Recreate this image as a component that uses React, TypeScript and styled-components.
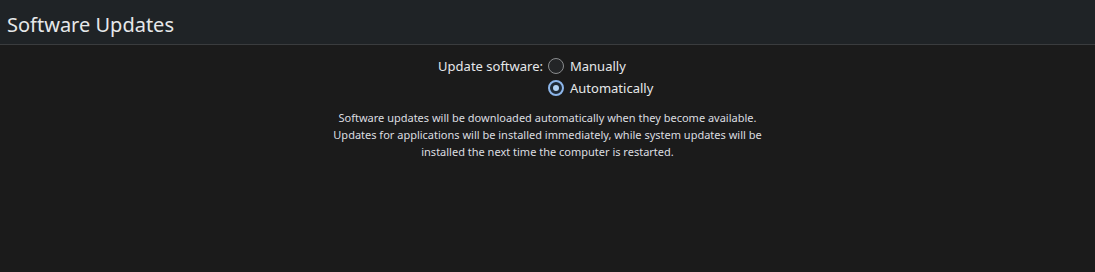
import React, { useState } from "react";
import styled, { createGlobalStyle } from "styled-components";

const Global = createGlobalStyle`
  html, body { margin: 0; padding: 0; background: #1b1b1b; }
  body { font-family: "Noto Sans", "Open Sans", sans-serif; color: #fcfcfc; }
`;

const Page = styled.div`
  width: 1095px;
  height: 272px;
  background: #1b1b1b;
  display: flex;
  flex-direction: column;
`;

const Header = styled.header`
  height: 45px;
  box-sizing: border-box;
  background: #1f2326;
  border-bottom: 1px solid #3a3c3e;
  display: flex;
  align-items: center;
  padding: 0 7px;
`;

const Title = styled.h1`
  margin: 0;
  font-size: 20px;
  font-weight: 400;
  color: #e6e8ea;
  letter-spacing: 0;
  padding-top: 4px;
`;

const Body = styled.main`
  display: flex;
  flex-direction: column;
  align-items: center;
  padding-top: 10px;
`;

const Form = styled.div`
  width: 100%;
  box-sizing: border-box;
  padding-right: 4px;
  display: grid;
  grid-template-columns: 1fr 1fr;
  column-gap: 5px;
`;

const Label = styled.div`
  text-align: right;
  font-size: 13px;
  color: #e6e8ea;
  line-height: 22px;
`;

const Options = styled.div`
  display: flex;
  flex-direction: column;
`;

const Option = styled.label`
  display: flex;
  align-items: center;
  gap: 6px;
  height: 22px;
  font-size: 13px;
  color: #e6e8ea;
  cursor: pointer;
`;

const Circle = styled.span<{ $checked: boolean }>`
  width: 16px;
  height: 16px;
  box-sizing: border-box;
  border-radius: 50%;
  border: ${(p) => (p.$checked ? "2px solid #8db6ea" : "1.5px solid #8a8c8e")};
  background: ${(p) => (p.$checked ? "#1f2a36" : "#232527")};
  display: flex;
  align-items: center;
  justify-content: center;
  &::after {
    content: "";
    width: 6px;
    height: 6px;
    border-radius: 50%;
    background: #b3d3f5;
    display: ${(p) => (p.$checked ? "block" : "none")};
  }
`;

const Description = styled.p`
  margin: 10px 0 0;
  max-width: 440px;
  text-align: center;
  font-size: 11px;
  line-height: 17px;
  color: #dcdee0;
`;

export default function App() {
  const [mode, setMode] = useState("auto");
  return (
    <>
      <Global />
      <Page>
        <Header>
          <Title>Software Updates</Title>
        </Header>
        <Body>
          <Form>
            <Label>Update software:</Label>
            <Options>
              <Option onClick={() => setMode("manual")}>
                <Circle $checked={mode === "manual"} />
                Manually
              </Option>
              <Option onClick={() => setMode("auto")}>
                <Circle $checked={mode === "auto"} />
                Automatically
              </Option>
            </Options>
          </Form>
          <Description>
            Software updates will be downloaded automatically when they become available.
            <br />
            Updates for applications will be installed immediately, while system updates will be
            <br />
            installed the next time the computer is restarted.
          </Description>
        </Body>
      </Page>
    </>
  );
}
